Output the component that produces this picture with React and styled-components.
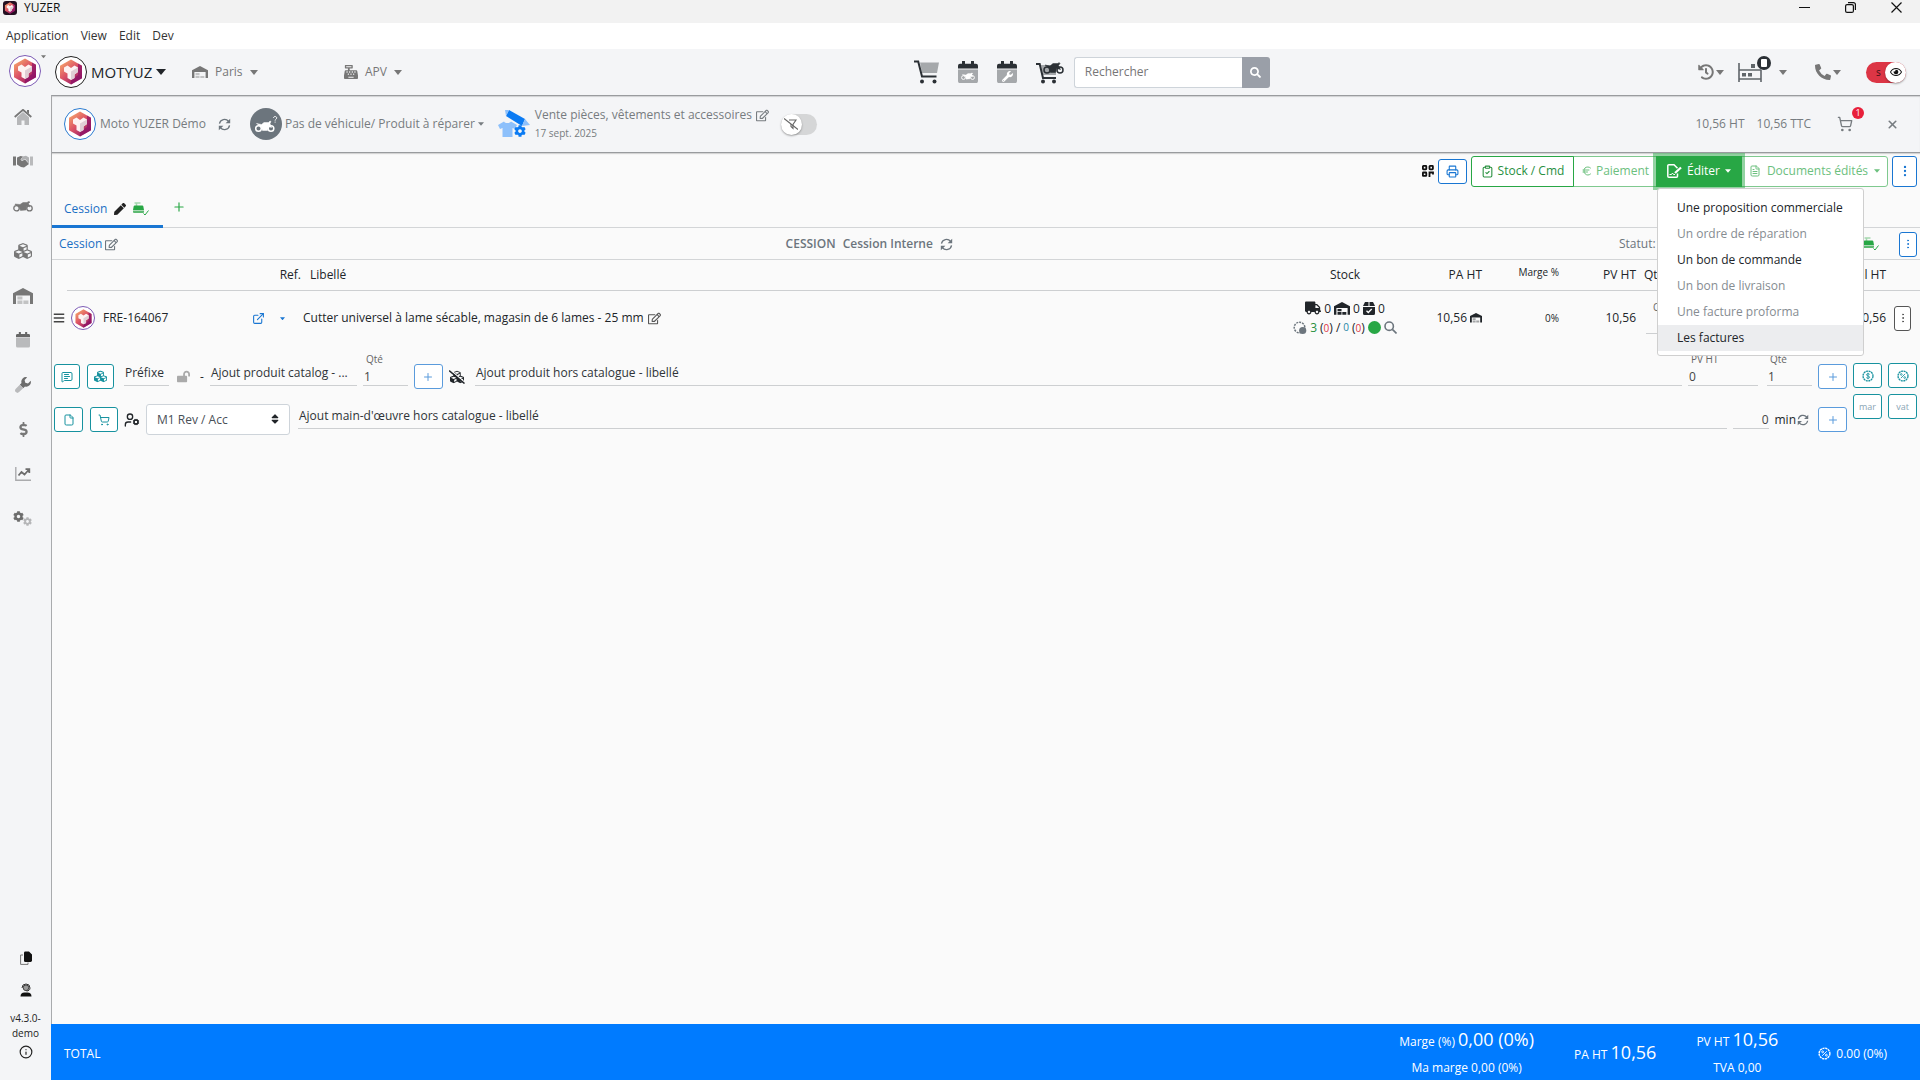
import React from "react";
import styled, { createGlobalStyle, css } from "styled-components";
import {
  FaCubes, FaWrench, FaDollarSign, FaCashRegister, FaRegEdit, FaSearch, FaPhoneAlt,
  FaHistory, FaPen, FaTruck,
  FaLockOpen, FaBars, FaSort, FaRegEye, FaCog,
} from "react-icons/fa";
import {
  Printer, ClipboardCheck, Euro, FileText, EllipsisVertical, Plus, X, ShoppingCart,
  MessageSquareText, File as FileIcon, ExternalLink, Info, UserCog,
} from "lucide-react";

const GlobalStyle = createGlobalStyle`
  * { box-sizing: border-box; }
  body {
    margin: 0;
    background: #fafafa;
    color: #212529;
    font-family: "Segoe UI", "Open Sans", "Noto Sans", sans-serif;
    font-size: 12px;
    line-height: 20px;
  }
  button, input, select { font: inherit; color: inherit; margin: 0; }
  button { cursor: pointer; }
  svg { display: block; flex: none; }
`;

/* ---------- drawings ---------- */

const Caret = ({ size = 8 }) => (
  <svg width={size} height={size / 2 + 1} viewBox="0 0 10 6" fill="currentColor"><path d="M0 0h10L5 6z" /></svg>
);

const Hexagon = ({ size = 26 }) => (
  <svg width={size} height={size} viewBox="0 0 26 26">
    <defs>
      <linearGradient id="hexFill" x1="0.1" y1="0.1" x2="0.8" y2="1">
        <stop offset="0" stopColor="#f4a06a" />
        <stop offset="0.45" stopColor="#dd5566" />
        <stop offset="1" stopColor="#8e1468" />
      </linearGradient>
    </defs>
    <path d="M13 0.5 24 6.8V19.2L13 25.5 2 19.2V6.8z" fill="url(#hexFill)" />
    <path d="M20 4.500 24 6.8V19.2L13 25.5V21L20 16z" fill="#8a1065" opacity="0.65" />
    <path d="M6 8.500 9.500 6.500 13 9 16.500 6.500 20 8.500V13L16.500 15.500V19L13 21 9.500 19V14.500L6 12.500z" fill="#fdf3f3" />
    <path d="M13 12.5 20 8.500V13L16.500 15.500V19L13 21z" fill="#e0ced5" />
  </svg>
);

const Warehouse = ({ size = 16, faded = true }) => (
  <svg width={size} height={size * 0.8} viewBox="0 0 20 16" fill="currentColor">
    <path d="M0 16V5.2L10 0l10 5.2V16h-3V7.5H3V16z" />
    <g opacity={faded ? 0.4 : 1}>
      <path d="M4.4 8.6h5v3h-5zM4.4 12.6h5V16h-5zM10.4 12.6h5V16h-5z" />
    </g>
  </svg>
);

const Motorbike = ({ size = 20 }) => (
  <svg width={size} height={size * 0.55} viewBox="0 0 40 22" fill="none" stroke="currentColor" strokeWidth="2.6">
    <circle cx="7" cy="14.5" r="5.4" />
    <circle cx="33" cy="14.5" r="5.4" />
    <path d="M4 6 14 7 20 3 28 3 31 1 34 2 31 5 34 12 28 10 26 18 15 19 12 11 5 8z" fill="currentColor" strokeWidth="1" />
  </svg>
);

const UnknownBike = () => (
  <svg width="24" height="18" viewBox="0 0 24 18" fill="none" stroke="#fff">
    <circle cx="4.500" cy="13.500" r="2.800" strokeWidth="1.500" />
    <circle cx="17" cy="13.500" r="2.800" strokeWidth="1.500" />
    <path d="M2.500 8.500 7.500 9.500 10 7.500h4.500L16 6l1 .5L16 8.500l1.500 4-3-1-1 4H8.500l-1.500-4z" fill="#fff" strokeWidth="0.500" />
    <path d="M19.500 3c0-2 3.200-2 3.200 0 0 1.300-1.600 1.200-1.600 2.600M21.100 6.600v1" strokeWidth="1" />
  </svg>
);

const Sync = ({ size = 13 }) => (
  <svg width={size} height={size} viewBox="0 0 16 16" fill="none" stroke="#6c757d" strokeWidth="1.6">
    <path d="M1.8 7A6.3 6.3 0 0 1 13 4.2" />
    <path d="M14.2 9A6.3 6.3 0 0 1 3 11.8" />
    <path d="M15 1v5.6H9.4z M1 15V9.4h5.6z" fill="#6c757d" stroke="none" />
  </svg>
);

const HomeDuo = () => (
  <svg width="18" height="16" viewBox="0 0 18 16">
    <path d="M3 8.3 9 3l6 5.3V16h-4.500v-4.500h-3V16H3z" fill="#b6b7b9" />
    <path d="M0.700 8 9 0.800 17.300 8" fill="none" stroke="#777" strokeWidth="1.800" />
    <path d="M13 1h2v4l-2-1.700z" fill="#777" />
  </svg>
);

const Handshake = () => (
  <svg width="20" height="13" viewBox="0 0 20 13">
    <path d="M0 1.500h3v9H0z" fill="#777" />
    <path d="M17 1.500h3v9h-3z" fill="#b9babc" />
    <path d="M4 2.500 7.500 1 10 1.500 7.500 4.500 9 6 12 4.500 16 9 11 12.500 8 12 4 9.500z" fill="#777" />
    <path d="M9.500 1.500 13 0.800 16 2.500V8.500L12.200 4 9 5.500 8 4.700z" fill="#b0b1b3" />
  </svg>
);

const Calendar = ({ size = 15, top = "#666", bottom = "#b9babc", children }) => (
  <svg width={size} height={size * 1.12} viewBox="0 0 20 22.400">
    <path d="M0 8.500h20V20a2.200 2.200 0 0 1-2.200 2.200H2.200A2.200 2.200 0 0 1 0 20z" fill={bottom} />
    <path d="M0 7.600V4.800a2 2 0 0 1 2-2h2V.8a1 1 0 0 1 3 0v2h6v-2a1 1 0 0 1 3 0v2h2a2 2 0 0 1 2 2v2.800z" fill={top} />
    {children}
  </svg>
);

const WrenchDuo = () => (
  <svg width="16" height="16" viewBox="0 0 16 16">
    <defs>
      <linearGradient id="wrenchTone" x1="1" y1="0" x2="0" y2="1">
        <stop offset="0.58" stopColor="#6c6c6c" /><stop offset="0.58" stopColor="#b9babc" />
      </linearGradient>
    </defs>
    <path d="M15.700 3.800 13 6.400 10.300 5.700 9.600 3 12.200.3A4.600 4.600 0 0 0 6.500 6L.8 11.800a2.200 2.200 0 0 0 3.300 3.300L10 9.500a4.600 4.600 0 0 0 5.700-5.700z" fill="url(#wrenchTone)" />
  </svg>
);

const ChartDuo = () => (
  <svg width="16" height="14" viewBox="0 0 16 14" fill="none">
    <path d="M0.800 0v13.200H16" stroke="#aaabad" strokeWidth="1.400" />
    <path d="M3.500 8.500 6.500 5l3 2.500 4.500-5M10.500 2.200H14.300V6" stroke="#6c6c6c" strokeWidth="1.800" />
  </svg>
);

const GearsDuo = () => (
  <svg width="20" height="16" viewBox="0 0 20 16">
    <g><FaCog size={11} color="#6c6c6c" /></g>
    <g transform="translate(10 6)"><FaCog size={9} color="#b5b6b8" /></g>
  </svg>
);

const Cart = ({ bike }) => (
  <svg width={bike ? 28 : 25} height="24" viewBox={bike ? "0 0 28 24" : "0 0 25 24"} fill="none">
    <path d={bike ? "M5 5h15v10H7z" : "M6 2.500h19L23 13H8z"} fill="#a5a8ab" />
    <path d={bike ? "M0 4h3.700l3.300 14h13" : "M0 1.500h4.200L8 16.500h14.500"} stroke="#2b3035" strokeWidth="2" />
    <circle cx={bike ? 7 : 8} cy="21.500" r="2" fill="#2b3035" />
    <circle cx={bike ? 18 : 20.500} cy="21.500" r="2" fill="#2b3035" />
    {bike && (
      <g stroke="#2b3035" strokeWidth="1.500">
        <circle cx="11" cy="10" r="3" /><circle cx="24" cy="10" r="3" />
        <path d="M9 5l5 1 3-2.500h5l1-1 1 1-1.500 2 2 4-4-1-1 4h-5l-2-5z" fill="#2b3035" strokeWidth="0.500" />
      </g>
    )}
  </svg>
);

const Bed = () => (
  <svg width="24" height="20" viewBox="0 0 24 20" fill="none" stroke="#5f6569" strokeWidth="1.600">
    <path d="M1 1v19M1 8h22M23 8v12M1 17h22" />
    <path d="M4 11h4v3.500H4zM10 11h4v3.500h-4zM13 2h4v4h-4z" fill="#5f6569" stroke="none" />
  </svg>
);

const Parts = () => (
  <svg width="33" height="28" viewBox="0 0 33 28">
    <path d="M0 15 6 11.500c1 2 6 2 7 0L19 15l-2 4-2.500-1V27H4.500v-9L2 19z" fill="#8dc0fb" />
    <path d="M11 0l16 9-3 7L8 6z" fill="#0b7bf3" />
    <path d="M7 0l4 0-3 6zM27 9l5 6-8 1z" fill="#8dc0fb" />
    <g transform="translate(16 15)"><FaCog size={12} color="#0b7bf3" /></g>
  </svg>
);

const FilterOff = () => (
  <svg width="14" height="12" viewBox="0 0 14 12" fill="none" stroke="#666" strokeWidth="1.100">
    <path d="M5 2h7L9 6.500v4L7 8.500V6" /><path d="M0 0.500 14 11.500" />
  </svg>
);

const QrBlocks = () => (
  <svg width="12" height="12" viewBox="0 0 12 12" fill="none" stroke="#111" strokeWidth="1.800">
    <rect x="0.900" y="0.900" width="3.400" height="3.400" rx="0.500" />
    <rect x="7.500" y="0.900" width="3.400" height="3.400" rx="0.500" />
    <rect x="0.900" y="7.500" width="3.400" height="3.400" rx="0.500" />
    <path d="M7.500 12V7.500H11V9.500" />
  </svg>
);

const SignedFile = () => (
  <svg width="15" height="14" viewBox="0 0 15 14" fill="none" stroke="#fff" strokeWidth="1.500">
    <path d="M10.500 9.500v2.700a1 1 0 0 1-1 1H1.800a1 1 0 0 1-1-1V1.800a1 1 0 0 1 1-1H7l3.500 3.500" />
    <path d="M2.500 10.500h2l1-1.500 1 1.500h1.500" strokeWidth="1" />
    <path d="M8 9 14 3.500" strokeWidth="2.200" />
  </svg>
);

const CopyDuo = () => (
  <svg width="12" height="14" viewBox="0 0 12 14">
    <path d="M3 4H.6v9.400H8V11.500" fill="none" stroke="#777" />
    <path d="M4 2a1.400 1.400 0 0 1 1.400-1.400H9L12 3.500V9.500A1.400 1.400 0 0 1 10.600 11H5.400A1.400 1.400 0 0 1 4 9.500z" fill="#111" />
  </svg>
);

const Support = () => (
  <svg width="12" height="14" viewBox="0 0 12 14" fill="none">
    <circle cx="6" cy="4.800" r="2.800" fill="#999" stroke="#444" />
    <path d="M2 5a4 4 0 0 1 8 0c0 2-1.500 3-3.500 3" stroke="#333" />
    <path d="M0.500 13.500c0-2.500 1.500-4 4-4h3c2.500 0 4 1.500 4 4z" fill="#111" />
  </svg>
);

const Register = () => (
  <svg width="16" height="14" viewBox="0 0 16 14" fill="none">
    <path d="M1.500 1h6M3.500 1v3" stroke="#a5d8af" strokeWidth="1.500" />
    <path d="M1.700 3.500h7.600a1 1 0 0 1 1 .8L11 8H0l.7-3.700a1 1 0 0 1 1-.8z" fill="#28a745" />
    <path d="M0 8.500h11V10a1 1 0 0 1-1 1H1a1 1 0 0 1-1-1z" fill="#5cb970" />
    <path d="M10.500 11.500l1.500 1.500 3.500-4.500" stroke="#28a745" />
  </svg>
);

const Package = () => (
  <svg width="12" height="13" viewBox="0 0 12 13">
    <path d="M2 0h3.500v4H0zM6.500 0H10l2 4H6.500zM0 5h12v6.500A1.500 1.500 0 0 1 10.500 13h-9A1.500 1.500 0 0 1 0 11.500z" fill="#212529" />
    <path d="M3.500 8.700 5.300 10.500 8.700 7" fill="none" stroke="#fff" strokeWidth="1.300" />
  </svg>
);

const CubesOff = () => (
  <svg width="16" height="14" viewBox="0 0 16 14">
    <g transform="translate(1 0)"><FaCubes size={14} /></g>
    <path d="M1.500 0 16 12.500" stroke="#fafafa" strokeWidth="1.200" /><path d="M0 0.500 15.500 13.500" stroke="#212529" strokeWidth="1.500" />
  </svg>
);

const StockBadge = () => (
  <svg width="14" height="14" viewBox="0 0 14 14" fill="none">
    <circle cx="6.500" cy="6.500" r="5.300" stroke="#6c757d" strokeWidth="1.500" strokeDasharray="2 1" />
    <circle cx="9.700" cy="9.500" r="3.600" fill="#6c757d" />
  </svg>
);

const Seal = ({ size = 12, kind }) => (
  <svg width={size} height={size} viewBox="0 0 14 14" fill="none" stroke="currentColor">
    <circle cx="7" cy="7" r="5.800" strokeWidth="1.500" strokeDasharray="2.400 0.640" />
    {kind === "amount"
      ? <path d="M9 5.200C8.500 4 5.200 4 5.200 5.600S9 6.800 9 8.400 5.500 10 5 8.800M7 3.200v7.600" />
      : <><path d="M9.500 4.500l-5 5" /><circle cx="5" cy="5.200" r="1" /><circle cx="9" cy="8.800" r="1" /></>}
  </svg>
);

const Magnifier = () => (
  <svg width="13" height="13" viewBox="0 0 13 13" fill="none" stroke="#6c757d" strokeWidth="1.600">
    <circle cx="5.200" cy="5.200" r="4.200" /><path d="M8.400 8.400 12.500 12.500" />
  </svg>
);

const Minimise = () => <svg width="11" height="11" viewBox="0 0 11 11" stroke="#111"><path d="M0 5.500h11" /></svg>;
const Restore = () => (
  <svg width="11" height="11" viewBox="0 0 11 11" fill="none" stroke="#111" strokeWidth="1.200">
    <rect x="0.600" y="2.600" width="7.800" height="7.800" rx="1.500" /><path d="M3 .6h5.400a2 2 0 0 1 2 2V8" />
  </svg>
);
const CloseWindow = () => <svg width="11" height="11" viewBox="0 0 11 11" stroke="#111" strokeWidth="1.200"><path d="M.5.5l10 10M10.500.5l-10 10" /></svg>;

/* ---------- window chrome ---------- */

const Page = styled.div`
  min-height: 100vh;
  display: flex;
  flex-direction: column;
`;
const TitleBar = styled.header`
  height: 23px;
  padding: 0 18px 8px 3px;
  background: #f2f2f2;
  display: flex;
  align-items: center;
  gap: 7px;
  color: #111;
`;
const AppIcon = styled.span`
  width: 14px;
  height: 14px;
  border-radius: 3px;
  background: #241021;
  display: grid;
  place-items: center;
`;
const WindowButtons = styled.div`
  margin-left: auto;
  display: flex;
  gap: 35px;
`;
const BareButton = styled.button`
  border: 0;
  padding: 0;
  background: none;
  display: inline-flex;
  align-items: center;
  gap: ${(p) => p.$gap || 0}px;
  color: ${(p) => p.$color || "inherit"};
`;
const MenuBar = styled.nav`
  height: 26px;
  padding: 0 6px;
  background: #fff;
  display: flex;
  align-items: center;
  gap: 12px;
  color: #333;
`;

/* ---------- top bar ---------- */

const TopBar = styled.div`
  height: 46px;
  background: #f4f5f7;
  display: flex;
  color: #777;
`;
const BrandCell = styled.div`
  width: 51px;
  padding: 6px 0 0 9px;
  display: flex;
  align-items: flex-start;
`;
const Ring = styled.span`
  width: ${(p) => p.$size || 32}px;
  height: ${(p) => p.$size || 32}px;
  border-radius: 50%;
  border: ${(p) => (p.$fill ? 0 : 1)}px solid ${(p) => p.$color};
  background: ${(p) => p.$fill || "#fff"};
  color: #fff;
  display: grid;
  place-items: center;
  flex: none;
`;
const TopGrid = styled.div`
  flex: 1;
  display: grid;
  grid-template-columns: 46% auto 1fr;
  align-items: center;
`;
const Group = styled.div`
  display: flex;
  align-items: center;
  gap: ${(p) => p.$gap || 0}px;
  margin-left: ${(p) => (p.$end ? "auto" : "0")};
  justify-content: ${(p) => (p.$packEnd ? "flex-end" : "flex-start")};
  padding: ${(p) => p.$pad || "0"};
`;
const Company = styled(BareButton)`
  font-size: 15px;
  color: #212529;
  gap: 4px;
  width: 137px;
`;
const Picker = styled(BareButton)`
  gap: 7px;
  width: ${(p) => p.$width}px;
`;
const Search = styled.form`
  display: flex;
  height: 31px;
  margin-left: 10px;
`;
const SearchInput = styled.input`
  width: 168px;
  border: 1px solid #ced4da;
  border-right: 0;
  border-radius: 3px 0 0 3px;
  padding: 0 10px;
  background: #fff;
  &::placeholder { color: #777; opacity: 1; }
`;
const SearchButton = styled.button`
  width: 28px;
  border: 0;
  border-radius: 0 3px 3px 0;
  background: #9a9fa8;
  color: #fff;
  display: grid;
  place-items: center;
`;
const Badged = styled.span`
  position: relative;
  display: inline-flex;
`;
const Badge = styled.span`
  position: absolute;
  right: ${(p) => p.$right}px;
  top: ${(p) => p.$top}px;
  width: ${(p) => p.$size}px;
  height: ${(p) => p.$size}px;
  border-radius: 50%;
  background: ${(p) => p.$color};
  color: #fff;
  font-size: 9px;
  line-height: ${(p) => p.$size}px;
  display: grid;
  place-items: center;
`;
const Device = styled.i`
  width: 6px;
  height: 8px;
  background: #fff;
  border-radius: 1px;
`;
const Toggle = styled.label`
  position: relative;
  display: flex;
  align-items: center;
  width: ${(p) => p.$width}px;
  height: 21px;
  padding-left: 10px;
  border-radius: 11px;
  background: ${(p) => p.$color};
  color: #3d1015;
  font-size: 10px;
  input { position: absolute; inset: 0; opacity: 0; }
`;
const Knob = styled.span`
  position: absolute;
  top: 0;
  ${(p) => (p.$right ? "right: 0;" : "left: 0;")}
  width: 21px;
  height: 21px;
  border-radius: 50%;
  background: #fff;
  box-shadow: 0 1px 2px rgba(0, 0, 0, 0.35);
  color: #111;
  display: grid;
  place-items: center;
`;

/* ---------- body ---------- */

const Body = styled.div`
  flex: 1;
  display: flex;
`;
const Sidebar = styled.aside`
  width: 51px;
  background: #f4f5f7;
  color: #777;
  display: flex;
  flex-direction: column;
  justify-content: space-between;
`;
const SideNav = styled.nav`
  height: 446px;
  padding-right: 5px;
  display: flex;
  flex-direction: column;
  button { flex: 1; justify-content: center; }
`;
const SideFoot = styled.div`
  padding-bottom: 20px;
  display: flex;
  flex-direction: column;
  align-items: center;
  color: #222;
  font-size: 10px;
  line-height: 15px;
  text-align: center;
  gap: 2px;
  button { height: 30px; }
  span { padding-top: 4px; }
  button:last-child { height: 17px; }
`;
const Main = styled.main`
  flex: 1;
  min-width: 0;
  border-left: 1px solid #a9abad;
  border-top: 1px solid #999b9e;
  display: flex;
  flex-direction: column;
`;
const OrderBar = styled.section`
  height: 57px;
  padding: 0 21px 0 12px;
  background: #f4f5f7;
  border-bottom: 1px solid #999b9e;
  box-shadow: 0 1px 1px rgba(0, 0, 0, 0.15), inset 0 1px 1px rgba(0, 0, 0, 0.15);
  display: flex;
  align-items: center;
  color: #777c80;
`;
const SaleTitle = styled.div`
  line-height: 18px;
  small { display: block; font-size: 10px; }
`;
const ActionBar = styled.div`
  height: 34px;
  padding: 2px 3px 0;
  display: flex;
  align-items: center;
  justify-content: flex-end;
  gap: 4px;
`;
const OutlineButton = styled.button`
  width: ${(p) => p.$w || 29}px;
  height: ${(p) => p.$h || 25}px;
  padding: 0;
  border: 1px solid ${(p) => p.$color || "#1976d2"};
  border-radius: 3px;
  background: #fff;
  color: ${(p) => p.$ink || p.$color || "#1976d2"};
  display: inline-grid;
  place-items: center;
  flex: none;
  font-size: 9px;
`;
const ButtonGroup = styled.div`
  display: flex;
  height: 31px;
`;
const GroupButton = styled.button`
  position: relative;
  width: ${(p) => p.$w}px;
  height: 31px;
  padding: 0;
  margin-left: -1px;
  border: 1px solid ${(p) => (p.disabled ? "#7fc98f" : "#28a745")};
  background: #fff;
  color: ${(p) => (p.disabled ? "#6cc07e" : "#28903f")};
  display: flex;
  align-items: center;
  justify-content: center;
  gap: ${(p) => p.$gap || 4}px;
  &:first-child { border-radius: 3px 0 0 3px; margin-left: 0; z-index: 1; }
  &:last-child { border-radius: 0 3px 3px 0; }
  ${(p) => p.$active && css`
    && { border-radius: 0; }
    z-index: 2;
    background: #28a745;
    color: #fff;
    box-shadow: 0 0 0 3px rgba(40, 167, 69, 0.5);
  `}
`;
const MenuAnchor = styled.div`
  position: relative;
  margin-left: -1px;
  z-index: 2;
`;
const Menu = styled.ul`
  position: absolute;
  top: 32px;
  left: 1px;
  z-index: 3;
  width: 207px;
  margin: 0;
  padding: 6px 0 4px;
  list-style: none;
  background: #fff;
  border: 1px solid #cfcfcf;
  border-radius: 3px;
`;
const MenuItem = styled.button`
  width: 100%;
  height: 26px;
  border: 0;
  padding: 0 19px;
  text-align: left;
  background: ${(p) => (p.$hover ? "#ecedef" : "none")};
  color: ${(p) => (p.disabled ? "#868c91" : "#212529")};
  white-space: nowrap;
`;
const Tabs = styled.div`
  height: 41px;
  border-bottom: 1px solid #d3d5d7;
  display: flex;
  align-items: stretch;
  gap: 9px;
`;
const Tab = styled.button`
  width: 111px;
  height: 41px;
  padding: 6px 0 0 12px;
  border: 0;
  border-bottom: 3px solid #1976d2;
  background: none;
  color: #1a6fc4;
  display: flex;
  align-items: center;
  gap: 7px;
`;
const SubHeader = styled.div`
  height: 32px;
  padding: 1px 3px 0 7px;
  border-bottom: 1px solid #d3d5d7;
  color: #6c757d;
  display: grid;
  grid-template-columns: 39% auto 1fr;
  align-items: center;
  strong { font-weight: 600; }
`;
const Status = styled.span`
  min-width: 244px;
`;
const Link = styled.a`
  color: #1a6fc4;
  text-decoration: none;
`;

const Lines = styled.table`
  width: 100%;
  table-layout: fixed;
  border-collapse: collapse;
  th {
    height: 30px;
    padding: 0 1px;
    font-weight: 500;
    text-align: right;
    border-bottom: 1px solid #cdcfd1;
    color: #212529;
  }
  th:first-child { border-bottom: 0; }
  td { height: 55px; padding: 1px 1px 0; text-align: right; }
`;
const Th = styled.th`
  && {
    text-align: ${(p) => p.$align || "right"};
    padding-left: ${(p) => p.$pl || 1}px;
    padding-bottom: ${(p) => (p.$raised ? 6 : 0)}px;
  }
`;
const Td = styled.td`
  && { text-align: ${(p) => p.$align || "right"}; }
`;
const Small = styled.span`
  font-size: 10px;
`;
const StockLine = styled.div`
  display: flex;
  justify-content: center;
  align-items: center;
  gap: 3px;
  line-height: 19px;
  small { font-size: 10px; }
`;
const Tone = styled.span`
  color: ${(p) => p.$color};
`;
const Dot = styled.i`
  width: 13px;
  height: 13px;
  border-radius: 50%;
  background: #28a745;
`;

const Adders = styled.form`
  padding: 10px 3px 0 2px;
  display: flex;
  gap: 6px;
  align-items: flex-start;
`;
const AdderRows = styled.div`
  flex: 1;
  min-width: 0;
`;
const AdderRow = styled.div`
  height: 43px;
  display: flex;
  align-items: center;
  gap: ${(p) => p.$gap}px;
`;
const Field = styled.label`
  flex: ${(p) => (p.$w ? `0 0 ${p.$w}px` : "1 1 0")};
  min-width: 0;
  height: 31px;
  align-self: flex-start;
  border-bottom: 1px solid #cdcfd1;
  display: flex;
  flex-direction: column;
  justify-content: flex-end;
  font-size: 10px;
  line-height: 16px;
  color: #666;
  text-indent: 3px;
  white-space: nowrap;
  input {
    flex: none;
    width: 100%;
    height: ${(p) => (p.$labelled || p.$right ? 18 : 26)}px;
    padding: 0;
    border: 0;
    background: none;
    font-size: 12px;
    outline: 0;
    text-align: ${(p) => (p.$right ? "right" : "left")};
    text-indent: 1px;
    color: #444;
  }
  input::placeholder { color: #2f3438; opacity: 1; }
`;
const SelectBox = styled.span`
  position: relative;
  display: block;
  width: 144px;
  margin-right: 2px;
  select {
    width: 100%;
    height: 31px;
    padding: 0 10px;
    appearance: none;
    border: 1px solid #ced4da;
    border-radius: 3px;
    background: #fff;
    color: #495057;
  }
  svg { position: absolute; right: 9px; top: 9px; pointer-events: none; }
`;
const Extras = styled.div`
  display: grid;
  grid-template-columns: auto auto;
  gap: 6px;
  padding-top: 8px;
`;

const Totals = styled.footer`
  height: 56px;
  margin-top: auto;
  padding: 3px 33px 0 13px;
  background: #007bff;
  color: #fff;
  display: flex;
  align-items: center;
  gap: 40px;
  margin-left: -1px;
`;
const Total = styled.div`
  text-align: center;
  line-height: 26px;
  big { font-size: 18px; }
  &:first-child { margin-right: auto; }
`;

const menuItems = [
  ["Une proposition commerciale"],
  ["Un ordre de réparation", true],
  ["Un bon de commande"],
  ["Un bon de livraison", true],
  ["Une facture proforma", true],
  ["Les factures"],
];

const sideItems = [
  ["Accueil", <HomeDuo />],
  ["Clients", <Handshake />],
  ["Véhicules", <Motorbike size={20} />],
  ["Produits", <FaCubes size={18} />],
  ["Dépôts", <Warehouse size={20} />],
  ["Agenda", <Calendar size={14} />],
  ["Atelier", <WrenchDuo />],
  ["Finances", <FaDollarSign size={15} />],
  ["Statistiques", <ChartDuo />],
  ["Réglages", <GearsDuo />],
];

const teal = "#17929f";

export default function App() {
  return (
    <Page>
      <GlobalStyle />
      <TitleBar>
        <AppIcon><Hexagon size={12} /></AppIcon>
        YUZER
        <WindowButtons>
          <BareButton aria-label="Réduire"><Minimise /></BareButton>
          <BareButton aria-label="Restaurer"><Restore /></BareButton>
          <BareButton aria-label="Fermer"><CloseWindow /></BareButton>
        </WindowButtons>
      </TitleBar>
      <MenuBar>
        {["Application", "View", "Edit", "Dev"].map((m) => <BareButton key={m}>{m}</BareButton>)}
      </MenuBar>

      <TopBar>
        <BrandCell>
          <Ring $color="#7d5bb5"><Hexagon /></Ring>
          <Caret size={5} />
        </BrandCell>
        <TopGrid>
          <Group $pad="0 0 0 4px">
            <Company><Ring $color="#222"><Hexagon /></Ring>MOTYUZ<Caret size={10} /></Company>
            <Picker $width={152}><Warehouse size={16} />Paris<Caret /></Picker>
            <Picker $width={90}><FaCashRegister size={14} />APV<Caret /></Picker>
          </Group>
          <Group $gap={19} $pad="0 0 0 3px">
            <BareButton aria-label="Panier"><Cart /></BareButton>
            <BareButton aria-label="Agenda véhicules">
              <Calendar size={20} top="#2b3035" bottom="#a5a8ab">
                <g transform="translate(3 11.500)" color="#fff"><Motorbike size={14} /></g>
              </Calendar>
            </BareButton>
            <BareButton aria-label="Agenda atelier">
              <Calendar size={20} top="#2b3035" bottom="#a5a8ab">
                <g transform="translate(5 10)"><FaWrench size={11} color="#fff" /></g>
              </Calendar>
            </BareButton>
            <Group>
              <BareButton aria-label="Vente véhicule"><Cart bike /></BareButton>
              <Search onSubmit={(e) => e.preventDefault()}>
                <SearchInput aria-label="Rechercher" placeholder="Rechercher" />
                <SearchButton aria-label="Lancer la recherche"><FaSearch size={11} /></SearchButton>
              </Search>
            </Group>
          </Group>
          <Group $end $pad="0 14px 0 0">
            <Group $gap={14}>
              <BareButton $gap={2} aria-label="Historique"><FaHistory size={16} /><Caret /></BareButton>
              <BareButton $gap={17} aria-label="Ponts">
                <Badged><Bed /><Badge $size={14} $right={-9} $top={-6} $color="#2b3035"><Device /></Badge></Badged>
                <Caret />
              </BareButton>
            </Group>
            <Group $gap={25} $pad="0 0 0 28px">
              <BareButton $gap={2} aria-label="Téléphone"><FaPhoneAlt size={16} /><Caret /></BareButton>
              <Toggle $width={40} $color="#dc3545">
                <input type="checkbox" defaultChecked aria-label="Affichage" />s
                <Knob $right><FaRegEye size={12} /></Knob>
              </Toggle>
            </Group>
          </Group>
        </TopGrid>
      </TopBar>

      <Body>
        <Sidebar>
          <SideNav>
            {sideItems.map(([name, icon]) => <BareButton key={name} aria-label={name}>{icon}</BareButton>)}
          </SideNav>
          <SideFoot>
            <BareButton aria-label="Copier"><CopyDuo /></BareButton>
            <BareButton aria-label="Assistance"><Support /></BareButton>
            <span>v4.3.0-<br />demo</span>
            <BareButton aria-label="Informations"><Info size={14} /></BareButton>
          </SideFoot>
        </Sidebar>

        <Main>
          <OrderBar>
            <Group $gap={4}>
              <Ring $color="#2b7bd0"><Hexagon /></Ring>Moto YUZER Démo
            </Group>
            <Group $pad="0 19px 0 12px"><BareButton aria-label="Actualiser le client"><Sync /></BareButton></Group>
            <BareButton $gap={3}>
              <Ring $fill="#6c757d"><UnknownBike /></Ring>
              Pas de véhicule/ Produit à réparer<Caret size={6} />
            </BareButton>
            <Group $gap={4} $pad="0 12px 0 14px">
              <Parts />
              <SaleTitle>
                <Group $gap={4}>Vente pièces, vêtements et accessoires <FaRegEdit size={13} /></Group>
                <small>17 sept. 2025</small>
              </SaleTitle>
            </Group>
            <Toggle $width={36} $color="#d5d6d7">
              <input type="checkbox" aria-label="Filtre" /><Knob><FilterOff /></Knob>
            </Toggle>
            <Group $end $gap={12}>
              <span>10,56 HT</span><span>10,56 TTC</span>
            </Group>
            <Group $gap={33} $pad="0 0 0 26px">
              <Badged><ShoppingCart size={16} /><Badge $size={12} $right={-11} $top={-9} $color="#e8203a">1</Badge></Badged>
              <BareButton aria-label="Fermer la vente"><X size={13} strokeWidth={3} /></BareButton>
            </Group>
          </OrderBar>

          <ActionBar>
            <QrBlocks />
            <OutlineButton aria-label="Imprimer"><Printer size={13} /></OutlineButton>
            <ButtonGroup>
              <GroupButton $w={103}><ClipboardCheck size={13} />Stock / Cmd</GroupButton>
              <GroupButton $w={84} disabled $gap={3}><Euro size={12} />Paiement</GroupButton>
              <MenuAnchor>
                <GroupButton $active $w={86} $gap={5} aria-expanded="true">
                  <SignedFile />Éditer<Caret size={6} />
                </GroupButton>
                <Menu>
                  {menuItems.map(([label, off], i) => (
                    <li key={label}><MenuItem disabled={off} $hover={i === 5}>{label}</MenuItem></li>
                  ))}
                </Menu>
              </MenuAnchor>
              <GroupButton $w={147} disabled $gap={6}><FileText size={12} />Documents édités<Caret size={6} /></GroupButton>
            </ButtonGroup>
            <OutlineButton $w={25} $h={31} aria-label="Plus d'actions"><EllipsisVertical size={14} /></OutlineButton>
          </ActionBar>

          <Tabs>
            <Tab>Cession<FaPen size={12} color="#222" /><Register /></Tab>
            <BareButton $color="#28a745" aria-label="Ajouter une cession"><Plus size={14} /></BareButton>
          </Tabs>

          <SubHeader>
            <Group $gap={3}><Link href="#cession">Cession</Link><FaRegEdit size={13} /></Group>
            <Group $gap={7} $pad="0 0 0 2px">
              <strong>CESSION</strong><strong>Cession Interne</strong>
              <BareButton aria-label="Actualiser la cession"><Sync size={13} /></BareButton>
            </Group>
            <Group $end>
              <Status>Statut:</Status>
              <Group $gap={20}><Register /><OutlineButton $w={18} aria-label="Options"><EllipsisVertical size={12} /></OutlineButton></Group>
            </Group>
          </SubHeader>

          <Lines>
            <colgroup>
              <col width="15" /><col width="235" /><col /><col width="140" /><col width="68" />
              <col width="77" /><col width="77" /><col width="123" /><col width="127" /><col width="33" />
            </colgroup>
            <thead>
              <tr>
                <th /><Th>Ref.</Th><Th $align="left" $pl={8}>Libellé</Th><Th $align="center">Stock</Th><Th>PA HT</Th>
                <Th $raised><Small>Marge %</Small></Th><Th>PV HT</Th><Th $align="left" $pl={7}>Qté</Th><Th>Total HT</Th><th />
              </tr>
            </thead>
            <tbody>
              <tr>
                <Td $align="left"><FaBars size={12} color="#444" /></Td>
                <td>
                  <Group $gap={8} $pad="0 16px 0 3px">
                    <Ring $size={24} $color="#7d5bb5"><Hexagon size={19} /></Ring>FRE-164067
                    <Group $end $gap={15}>
                      <BareButton $color="#1976d2" aria-label="Ouvrir le produit"><ExternalLink size={13} /></BareButton>
                      <BareButton $color="#1976d2" aria-label="Options du produit"><Caret size={5} /></BareButton>
                    </Group>
                  </Group>
                </td>
                <td>
                  <Group $gap={4}>Cutter universel à lame sécable, magasin de 6 lames - 25 mm<FaRegEdit size={13} color="#555" /></Group>
                </td>
                <td>
                  <StockLine><FaTruck size={16} />0<Warehouse size={16} faded={false} />0<Package />0</StockLine>
                  <StockLine>
                    <StockBadge /><Tone $color="#28903f">3</Tone>
                    <span>(<small><Tone $color="#dc3545">0</Tone></small>)</span>/
                    <small><Tone $color="#2787a5">0</Tone></small>
                    <span>(<small><Tone $color="#dc3545">0</Tone></small>)</span>
                    <Dot /><Magnifier />
                  </StockLine>
                </td>
                <td><Group $gap={3} $packEnd>10,56<Warehouse size={12} /></Group></td>
                <td><Small>0%</Small></td>
                <td>10,56</td>
                <td>
                  <Group $pad="0 0 0 8px"><Field $w={24} $labelled $right>Qté<input defaultValue="1" /></Field></Group>
                </td>
                <td>10,56</td>
                <td><Group $pad="0 0 0 6px"><OutlineButton $w={17} $color="#555" aria-label="Options de ligne"><EllipsisVertical size={12} /></OutlineButton></Group></td>
              </tr>
            </tbody>
          </Lines>

          <Adders onSubmit={(e) => e.preventDefault()}>
            <AdderRows>
              <AdderRow $gap={6}>
                <OutlineButton type="button" $w={26} $color={teal} aria-label="Commentaire"><MessageSquareText size={12} /></OutlineButton>
                <Group $pad="0 4px 0 1px"><OutlineButton type="button" $w={27} $color={teal} aria-label="Produits"><FaCubes size={13} /></OutlineButton></Group>
                <Field $w={45}><input aria-label="Préfixe" placeholder="Préfixe" /></Field>
                <Group $gap={10} $pad="0 0 0 2px"><FaLockOpen size={13} color="#aaa" />-</Group>
                <Field $w={147}><input aria-label="Produit catalogue" placeholder="Ajout produit catalog - ..." /></Field>
                <Field $w={45} $labelled>Qté<input defaultValue="1" /></Field>
                <OutlineButton type="button" $color="#5a9bdc" aria-label="Ajouter le produit"><Plus size={12} /></OutlineButton>
                <Group $pad="0 4px 0 0"><CubesOff /></Group>
                <Field><input aria-label="Produit hors catalogue" placeholder="Ajout produit hors catalogue - libellé" /></Field>
                <Group $pad="0 3px 12px 0"><Field $w={70} $labelled>PV HT<input defaultValue="0" /></Field></Group>
                <Field $w={45} $labelled>Qté<input defaultValue="1" /></Field>
                <OutlineButton type="button" $color="#5a9bdc" aria-label="Ajouter hors catalogue"><Plus size={12} /></OutlineButton>
              </AdderRow>
              <AdderRow $gap={6}>
                <OutlineButton type="button" $color={teal} aria-label="Document"><FileIcon size={12} /></OutlineButton>
                <Group $pad="0 0 0 1px"><OutlineButton type="button" $w={28} $color={teal} aria-label="Panier"><ShoppingCart size={12} /></OutlineButton></Group>
                <UserCog size={16} />
                <SelectBox>
                  <select aria-label="Main-d'œuvre" defaultValue="m1"><option value="m1">M1 Rev / Acc</option></select>
                  <FaSort size={12} />
                </SelectBox>
                <Field><input aria-label="Main-d'œuvre hors catalogue" placeholder="Ajout main-d'œuvre hors catalogue - libellé" /></Field>
                <Field $w={36} $right><input aria-label="Durée" defaultValue="0" /></Field>
                <Group $gap={1} $pad="0 3px 0 0">min<Sync size={12} /></Group>
                <OutlineButton type="button" $color="#5a9bdc" aria-label="Ajouter main-d'œuvre"><Plus size={12} /></OutlineButton>
              </AdderRow>
            </AdderRows>
            <Extras>
              <OutlineButton type="button" $color={teal} aria-label="Remise montant"><Seal kind="amount" /></OutlineButton>
              <OutlineButton type="button" $color={teal} aria-label="Remise pourcentage"><Seal /></OutlineButton>
              <OutlineButton type="button" $color={teal} $ink="#8aa5b5">mar</OutlineButton>
              <OutlineButton type="button" $color={teal} $ink="#8aa5b5">vat</OutlineButton>
            </Extras>
          </Adders>

          <Totals>
            <Total>TOTAL</Total>
            <Total>Marge (%) <big>0,00 (0%)</big><br />Ma marge 0,00 (0%)</Total>
            <Total>PA HT <big>10,56</big></Total>
            <Total>PV HT <big>10,56</big><br />TVA 0,00</Total>
            <Total><Group $gap={5}><Seal size={13} />0.00 (0%)</Group></Total>
          </Totals>
        </Main>
      </Body>
    </Page>
  );
}
